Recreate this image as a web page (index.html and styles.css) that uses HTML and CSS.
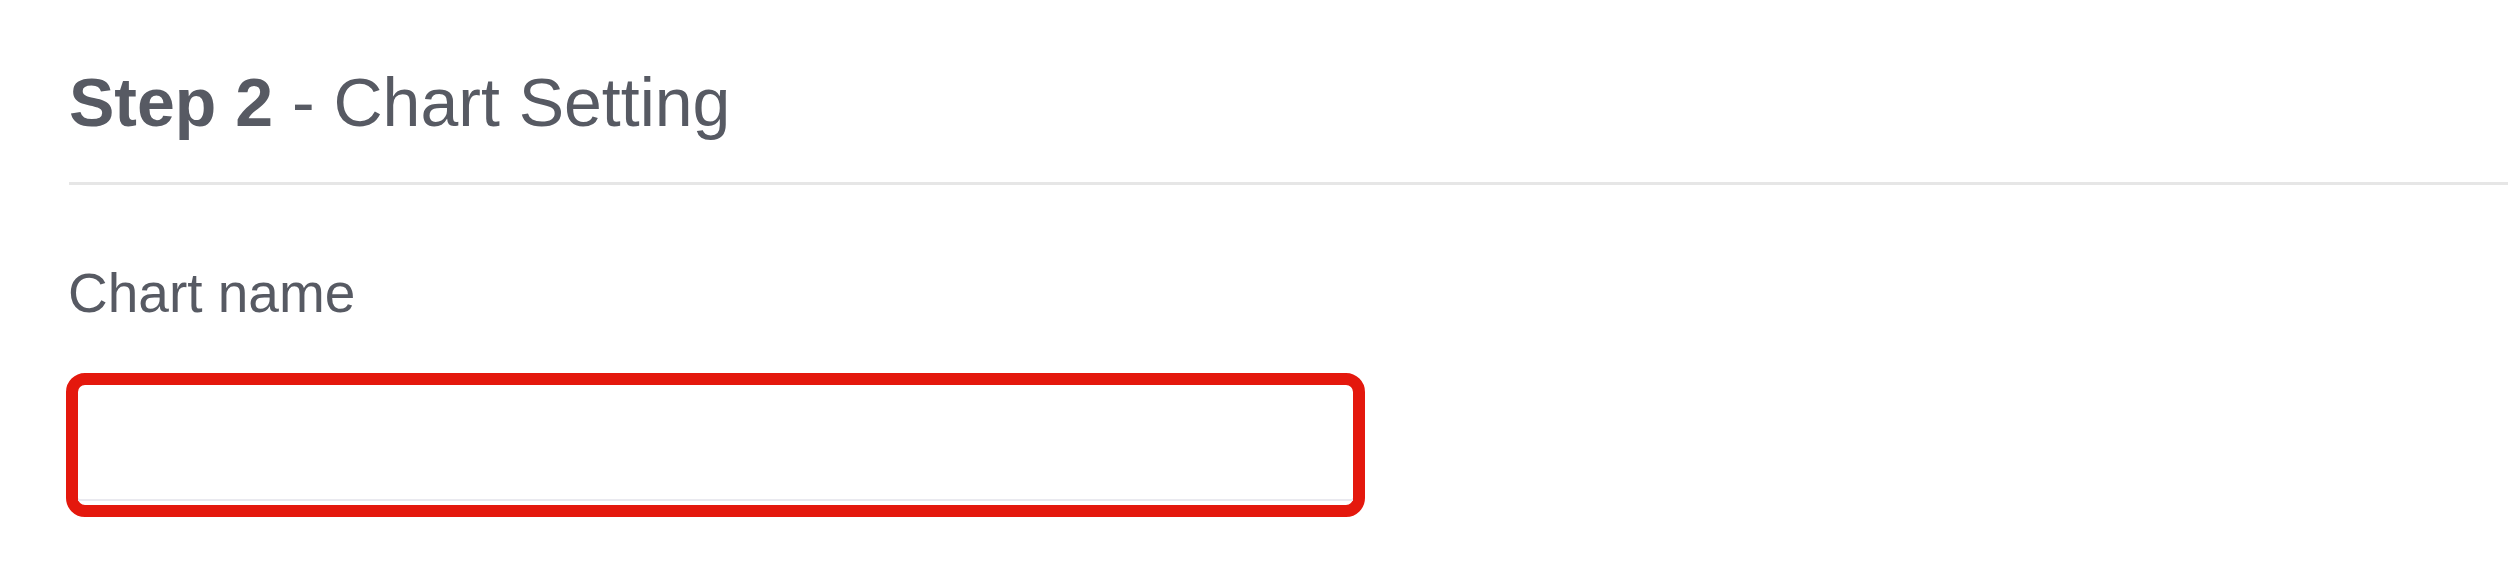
FILE: index.html
```html
<!DOCTYPE html>
<html lang="en">
<head>
<meta charset="utf-8">
<title>Step 2 - Chart Setting</title>
<link rel="stylesheet" href="styles.css">
</head>
<body>
<div class="page">
  <header class="step-header">
    <h2 class="step-title"><strong>Step 2</strong> - Chart Setting</h2>
  </header>
  <hr class="divider">
  <section class="form">
    <label class="field-label" for="chart-name">Chart name</label>
    <div class="field-highlight">
      <input class="field-input" id="chart-name" type="text">
    </div>
  </section>
</div>
</body>
</html>
```
FILE: styles.css
```css
html, body {
  margin: 0;
  padding: 0;
  background: #ffffff;
}

.page {
  font-family: "Liberation Sans", Arial, sans-serif;
  color: #575a63;
  padding-top: 68px;
}

.step-header {
  padding-left: 69px;
}

.step-title {
  margin: 0;
  font-size: 68px;
  line-height: 68px;
  font-weight: 400;
  color: #575a63;
}

.step-title strong {
  font-weight: 700;
}

.divider {
  margin: 46px 0 0 69px;
  border: 0;
  height: 3px;
  background: #e6e6e6;
}

.form {
  padding-left: 66px;
  padding-top: 81px;
  display: flex;
  flex-direction: column;
  align-items: flex-start;
}

.field-label {
  display: block;
  margin-left: 2px;
  font-size: 55px;
  line-height: 55px;
  color: #575a63;
}

.field-highlight {
  margin-top: 52px;
  width: 1299px;
  height: 144px;
  box-sizing: border-box;
  border: 12px solid #e4180d;
  border-radius: 19px;
  padding-bottom: 4px;
  background: #ffffff;
}

.field-input {
  display: block;
  width: 100%;
  height: 116px;
  box-sizing: border-box;
  margin: 0;
  padding: 0 20px;
  border: 0;
  border-bottom: 2px solid #e9e9ef;
  background: transparent;
  outline: none;
  font-family: "Liberation Sans", Arial, sans-serif;
  font-size: 40px;
}
```
